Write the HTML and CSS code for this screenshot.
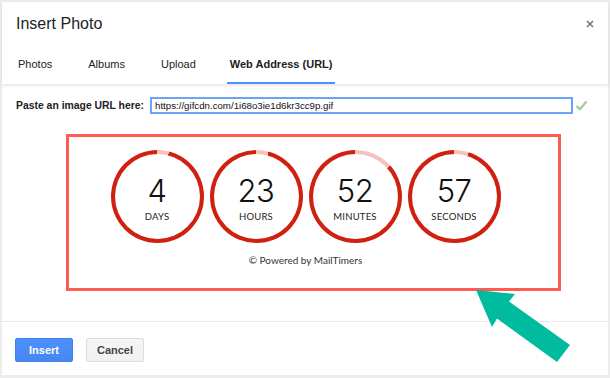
FILE: index.html
```html
<!DOCTYPE html>
<html lang="en">
<head>
    <meta charset="UTF-8">
    <meta name="viewport" content="width=device-width, initial-scale=1.0">
    <title>Insert Photo</title>
    <link rel="stylesheet" href="styles.css">
</head>
<body>

    <div class="dialog">
        <div class="header">
            <div class="title-row">
                <h1>Insert Photo</h1>
                <svg class="close" width="8" height="8" viewBox="0 0 8 8">
                    <path d="M1 1 L7 7 M7 1 L1 7" stroke="#777" stroke-width="1.6" fill="none"/>
                </svg>
            </div>
            <div class="tabs">
                <a href="#">Photos</a>
                <a href="#">Albums</a>
                <a href="#">Upload</a>
                <a href="#" class="active">Web Address (URL)</a>
            </div>
        </div>

        <div class="content">
            <div class="url-row">
                <label for="urlInput">Paste an image URL here:</label>
                <input type="text" id="urlInput" value="https://gifcdn.com/1i68o3ie1d6kr3cc9p.gif">
                <svg class="check" width="13" height="11" viewBox="0 0 13 11">
                    <path d="M1.5 6 L4.8 9.2 L11.5 1.5" stroke="#a3cc98" stroke-width="2.4" fill="none" stroke-linejoin="round"/>
                </svg>
            </div>

            <!-- preview of the timer gif, highlighted -->
            <div class="preview">
                <div class="timer">
                    <div class="ring" style="--gap: 4%">
                        <div class="face">
                            <span class="num">4</span>
                            <span class="unit">DAYS</span>
                        </div>
                    </div>
                    <div class="ring" style="--gap: 4.2%">
                        <div class="face">
                            <span class="num">23</span>
                            <span class="unit">HOURS</span>
                        </div>
                    </div>
                    <div class="ring" style="--gap: 13.3%">
                        <div class="face">
                            <span class="num">52</span>
                            <span class="unit">MINUTES</span>
                        </div>
                    </div>
                    <div class="ring" style="--gap: 5%">
                        <div class="face">
                            <span class="num">57</span>
                            <span class="unit">SECONDS</span>
                        </div>
                    </div>
                </div>
                <div class="powered">&copy; Powered by MailTimers</div>
            </div>
        </div>

        <div class="footer">
            <button class="btn btn-blue">Insert</button>
            <button class="btn">Cancel</button>
        </div>
    </div>

    <svg class="arrow" width="610" height="378" viewBox="0 0 610 378">
        <polygon points="476,290 515,294 509,301.5 570,345 557,362 497,318.5 492,327" fill="#00bb9d"/>
    </svg>

</body>
</html>
```

FILE: styles.css
```css
body {
    margin: 0;
    padding: 2px 2px 3px 2px;
    background-color: #ececec;
    font-family: "Liberation Sans", Arial, sans-serif;
    color: #222;
}
.dialog {
    background-color: #fff;
    height: 373px;
    display: flex;
    flex-direction: column;
}
.header {
    padding: 12px 0 0 13px;
    box-shadow: 0 2px 3px rgba(0, 0, 0, 0.09);
    position: relative;
}
.title-row {
    display: flex;
    align-items: center;
    justify-content: space-between;
}
.title-row h1 {
    margin: 0 0 0 1px;
    font-size: 16px;
    font-weight: normal;
    line-height: 20px;
    color: #222;
}
.close {
    margin-right: 14px;
}
.tabs {
    display: flex;
    gap: 30px;
    margin-top: 11px;
}
.tabs a {
    padding: 12px 3px 11px;
    font-size: 11px;
    line-height: 14px;
    color: #222;
    text-decoration: none;
    border-bottom: 2px solid transparent;
}
.tabs a.active {
    margin-left: -2px;
    font-weight: bold;
    border-bottom-color: #4d90fe;
}
.content {
    flex: 1;
}
.url-row {
    display: flex;
    align-items: center;
    margin: 13px 0 0 14px;
    height: 17px;
}
.url-row label {
    font-size: 10.4px;
    font-weight: bold;
    color: #222;
}
.url-row input {
    margin-left: 6px;
    width: 423px;
    height: 17px;
    box-sizing: border-box;
    padding: 0 3px;
    border: 2px solid #6aa3f7;
    font-family: "Liberation Sans", Arial, sans-serif;
    font-size: 9.7px;
    color: #111;
    outline: none;
}
.check {
    margin-left: 2px;
}
.preview {
    margin: 20px 0 0 64px;
    width: 495px;
    box-sizing: border-box;
    border: 3px solid #fd5c50;
    padding: 13px 16px 21px 0;
    font-family: Lato, "Open Sans", sans-serif;
}
.timer {
    display: flex;
    justify-content: center;
    gap: 6px;
}
.ring {
    width: 93px;
    height: 93px;
    box-sizing: border-box;
    padding: 4px;
    border-radius: 50%;
    background: conic-gradient(#f6c2bc 0 var(--gap), #d0200f var(--gap) 100%);
}
.face {
    height: 100%;
    box-sizing: border-box;
    border-radius: 50%;
    background-color: #fff;
    display: flex;
    flex-direction: column;
    align-items: center;
    padding-top: 21px;
}
.num {
    font-family: Inter, Lato, sans-serif;
    font-size: 31px;
    font-weight: 300;
    line-height: 32px;
    letter-spacing: -0.5px;
    color: #111;
}
.unit {
    margin-top: 4px;
    font-size: 9.5px;
    line-height: 12px;
    letter-spacing: 0.2px;
    color: #222;
}
.powered {
    margin-top: 10px;
    text-align: center;
    font-size: 10px;
    line-height: 14px;
    color: #333;
}
.footer {
    border-top: 1px solid #e8e8e8;
    padding: 16px 13px 13px;
    display: flex;
    gap: 13px;
}
.btn {
    width: 58px;
    height: 24px;
    padding: 0;
    border: 1px solid #dcdcdc;
    border-radius: 2px;
    background: linear-gradient(#f5f5f5, #f1f1f1);
    font-family: "Liberation Sans", Arial, sans-serif;
    font-size: 11px;
    font-weight: bold;
    color: #444;
    cursor: pointer;
}
.btn-blue {
    border-color: #3b82f0;
    background: linear-gradient(#4d90fe, #4787ed);
    color: #fff;
}
.arrow {
    position: absolute;
    top: 0;
    left: 0;
    pointer-events: none;
}
```
